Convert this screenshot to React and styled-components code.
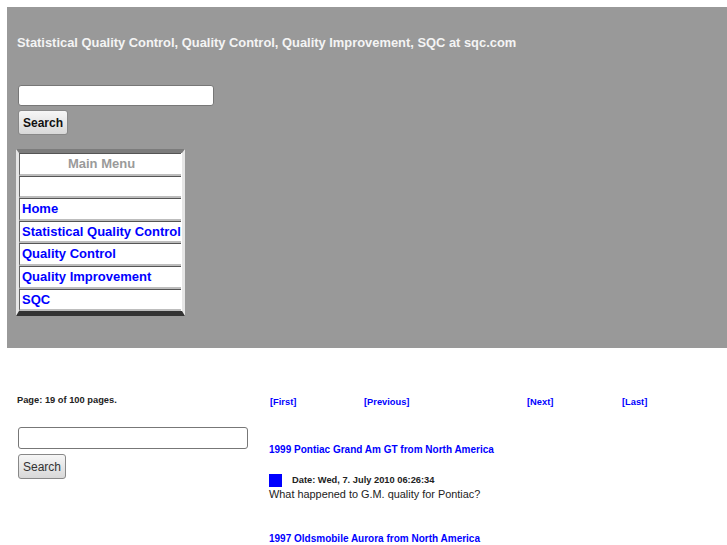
import React from "react";
import styled, { createGlobalStyle } from "styled-components";

const Global = createGlobalStyle`
  html, body { margin: 0; padding: 0; background: #fff; }
  body { font-family: "Liberation Sans", Arial, sans-serif; overflow: hidden; }
`;

const Page = styled.div`
  padding: 7px 0 0 7px;
`;

const Header = styled.div`
  background: #999999;
  height: 341px;
  padding: 28px 0 0 10px;
  box-sizing: border-box;
`;

const Title = styled.h1`
  margin: 0 0 34px 0;
  font-size: 12.9px;
  font-weight: bold;
  color: #f4f4f4;
  line-height: 16px;
`;

const SearchForm = styled.form`
  display: flex;
  flex-direction: column;
  align-items: flex-start;
  gap: ${(p) => p.$gap}px;
  margin: 0 0 14px 1px;
`;

const TextInput = styled.input`
  box-sizing: border-box;
  width: ${(p) => p.$w}px;
  height: ${(p) => p.$h}px;
  border: 1px solid #777;
  border-radius: 3px;
  background: #fff;
  margin: 0;
  padding: 0;
`;

const Button = styled.button`
  box-sizing: border-box;
  height: 25px;
  padding: 0 4px;
  font-family: "Liberation Sans", Arial, sans-serif;
  font-size: 12px;
  font-weight: ${(p) => (p.$bold ? "bold" : "normal")};
  color: ${(p) => (p.$bold ? "#111" : "#333")};
  border: 1px solid #888;
  border-radius: 3px;
  background: linear-gradient(#f6f6f6, #d8d8d8);
  margin: 0;
`;

const MenuBox = styled.div`
  width: 169px;
  box-sizing: border-box;
  margin-left: -1px;
  background: #fff;
  border-style: solid;
  border-width: 4px 3px 5px 3px;
  border-color: #7c7c7c #e6e6e6 #333 #e6e6e6;
  padding: 0 1px 0 0;
`;

const MenuCell = styled.div`
  box-sizing: border-box;
  height: 22.6px;
  border-top: 1px solid #555;
  border-bottom: 2px solid #bdbdbd;
  border-left: 1px solid #666;
  padding-left: 2px;
  font-size: 13px;
  font-weight: bold;
  line-height: 20px;
  white-space: nowrap;
  color: ${(p) => (p.$head ? "#9a9a9a" : "#0000ff")};
  text-align: ${(p) => (p.$head ? "center" : "left")};
`;

const Lower = styled.div`
  display: grid;
  grid-template-columns: 251px 1fr;
  padding: 46px 0 0 0;
`;

const LeftCol = styled.div`
  padding-left: 10px;
`;

const Small = styled.div`
  font-size: 9.3px;
  font-weight: bold;
  color: #222;
  line-height: 12px;
  margin-bottom: 21px;
`;

const RightCol = styled.div`
  padding-left: 11px;
  padding-top: 2px;
`;

const Nav = styled.div`
  display: grid;
  grid-template-columns: 94px 163px 95px auto;
  font-size: 9.3px;
  font-weight: bold;
  line-height: 12px;
  padding-left: 1px;
  margin-bottom: 35px;
`;

const NavLink = styled.a`
  color: #0000ff;
  text-decoration: none;
`;

const PostTitle = styled.a`
  display: block;
  color: #0000ff;
  font-size: 10px;
  font-weight: bold;
  line-height: 14px;
  white-space: nowrap;
  text-decoration: none;
  margin-bottom: ${(p) => p.$mb}px;
`;

const MetaRow = styled.div`
  display: flex;
  align-items: flex-end;
  gap: 10px;
`;

const Square = styled.span`
  display: inline-block;
  width: 13px;
  height: 13px;
  background: #0000ff;
`;

const DateText = styled.span`
  font-size: 9.3px;
  font-weight: bold;
  color: #222;
  line-height: 12px;
  margin-bottom: 1px;
`;

const Body = styled.div`
  font-size: 10.9px;
  color: #222;
  line-height: 14px;
  margin-bottom: 31px;
`;

const menu = [
  "Home",
  "Statistical Quality Control",
  "Quality Control",
  "Quality Improvement",
  "SQC",
];

export default function App() {
  return (
    <>
      <Global />
      <Page>
        <Header>
          <Title>
            Statistical Quality Control, Quality Control, Quality Improvement,
            SQC at sqc.com
          </Title>
          <SearchForm $gap={4} onSubmit={(e) => e.preventDefault()}>
            <TextInput $w={196} $h={21} />
            <Button $bold>Search</Button>
          </SearchForm>
          <MenuBox>
            <MenuCell $head>Main Menu</MenuCell>
            <MenuCell />
            {menu.map((m) => (
              <MenuCell key={m}>{m}</MenuCell>
            ))}
          </MenuBox>
        </Header>
        <Lower>
          <LeftCol>
            <Small>Page: 19 of 100 pages.</Small>
            <SearchForm $gap={5} onSubmit={(e) => e.preventDefault()}>
              <TextInput $w={230} $h={22} />
              <Button>Search</Button>
            </SearchForm>
          </LeftCol>
          <RightCol>
            <Nav>
              <NavLink href="#">[First]</NavLink>
              <NavLink href="#">[Previous]</NavLink>
              <NavLink href="#">[Next]</NavLink>
              <NavLink href="#">[Last]</NavLink>
            </Nav>
            <PostTitle href="#" $mb={17}>
              1999 Pontiac Grand Am GT from North America
            </PostTitle>
            <MetaRow>
              <Square />
              <DateText>Date: Wed, 7. July 2010 06:26:34</DateText>
            </MetaRow>
            <Body>What happened to G.M. quality for Pontiac?</Body>
            <PostTitle href="#" $mb={0}>
              1997 Oldsmobile Aurora from North America
            </PostTitle>
          </RightCol>
        </Lower>
      </Page>
    </>
  );
}
